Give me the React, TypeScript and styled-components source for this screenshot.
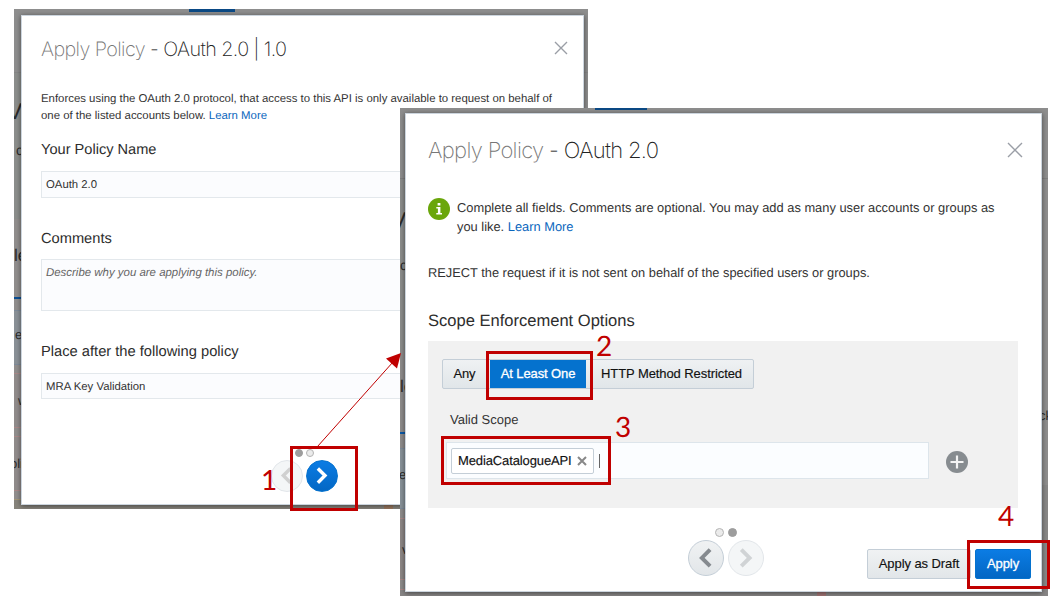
import React from "react";
import styled, { createGlobalStyle, css } from "styled-components";

const Global = createGlobalStyle`
  * { box-sizing: border-box; }
  body {
    margin: 0;
    background: #fff;
    font-family: "Liberation Sans", Arial, sans-serif;
    color: #333;
    text-rendering: geometricPrecision;
  }
`;

const Stage = styled.main`
  position: relative;
  width: 1062px;
  height: 606px;
  overflow: hidden;
  background: #fff;
`;

/* Window captures placed freely on the canvas */
const Shot = styled.section<{ $x: number; $y: number; $w: number; $h: number }>`
  position: absolute;
  left: ${(p) => p.$x}px;
  top: ${(p) => p.$y}px;
  width: ${(p) => p.$w}px;
  height: ${(p) => p.$h}px;
  overflow: hidden;
  background: #8e8e8e;
`;

const Backdrop = styled.div`
  display: flex;
  flex-direction: column;
  height: 100%;
`;

const Rails = styled.div`
  display: flex;
  justify-content: space-between;
`;

const Rail = styled.div`
  display: flex;
  flex-direction: column;
  width: 10px;
`;

const Band = styled.div<{ $h: number; $bg?: string; $line?: string; $thick?: number }>`
  flex: none;
  display: flex;
  align-items: center;
  height: ${(p) => p.$h}px;
  background: ${(p) => p.$bg || "#8e8e8e"};
  border-bottom: ${(p) => (p.$line ? `${p.$thick || 1}px solid ${p.$line}` : "0")};
`;

const Peek = styled.span<{ $size: number; $shift?: number }>`
  margin-left: ${(p) => p.$shift || 0}px;
  font-size: ${(p) => p.$size}px;
  line-height: 1;
  color: #2b2b2b;
`;

const Mark = styled.i<{ $x: number; $w: number; $h: number; $color?: string }>`
  display: block;
  margin-left: ${(p) => p.$x}px;
  width: ${(p) => p.$w}px;
  height: ${(p) => p.$h}px;
  background: ${(p) => p.$color || "#0b4a86"};
`;

const Dialog = styled.div<{ $inset: string; $pad: string }>`
  position: absolute;
  inset: ${(p) => p.$inset};
  padding: ${(p) => p.$pad};
  background: #fff;
  border: 1px solid #ccd5de;
  box-shadow: 0 1px 5px rgba(0, 0, 0, 0.5);
`;

const Header = styled.header`
  display: flex;
  align-items: center;
  justify-content: space-between;
  height: 34px;
`;

const Title = styled.h1<{ $size: number; $ls: number }>`
  margin: 0;
  font-family: Inter, "Liberation Sans", sans-serif;
  font-weight: 200;
  font-size: ${(p) => p.$size}px;
  letter-spacing: ${(p) => p.$ls}px;
  line-height: 34px;
  color: #222;
  white-space: pre;
  span { color: #777; }
`;

const Close = styled.button`
  display: flex;
  margin-bottom: 2px;
  padding: 0;
  border: 0;
  background: none;
`;

const Copy = styled.p<{ $size: number; $lh: number; $mt?: number; $ml?: number }>`
  margin: ${(p) => p.$mt || 0}px 0 0 ${(p) => p.$ml || 0}px;
  font-size: ${(p) => p.$size}px;
  line-height: ${(p) => p.$lh}px;
  color: #333;
  white-space: nowrap;
`;

const Line = styled.span`
  display: block;
`;

const Link = styled.a`
  color: #0a66bd;
`;

const Label = styled.h2<{ $mt: number; $size: number }>`
  margin: ${(p) => p.$mt}px 0 0;
  font-size: ${(p) => p.$size}px;
  font-weight: 400;
  line-height: 20px;
  color: #2d2d2d;
`;

const Field = styled.div<{ $mt: number; $h: number; $hint?: boolean }>`
  width: 520px;
  height: ${(p) => p.$h}px;
  margin-top: ${(p) => p.$mt}px;
  padding: 6px 4px 0;
  border: 1px solid #e3e8ec;
  background: #fbfcfe;
  font-size: 11.35px;
  line-height: 15px;
  color: #333;
  ${(p) => p.$hint && css`font-style: italic; color: #666; font-size: 11.45px;`}
`;

const Pager = styled.nav<{ $ml: number; $mt: number }>`
  display: flex;
  flex-direction: column;
  align-items: flex-start;
  margin: ${(p) => p.$mt}px 0 0 ${(p) => p.$ml}px;
`;

const Dots = styled.div<{ $ml: number; $gap: number }>`
  display: flex;
  gap: ${(p) => p.$gap}px;
  margin-left: ${(p) => p.$ml}px;
`;

const Dot = styled.i<{ $on?: boolean; $d: number }>`
  width: ${(p) => p.$d}px;
  height: ${(p) => p.$d}px;
  border-radius: 50%;
  border: 1.5px solid ${(p) => (p.$on ? "#9d9d9d" : "#b4b4b4")};
  background: ${(p) => (p.$on ? "#9d9d9d" : "#ebebeb")};
`;

const Steps = styled.div<{ $gap: number; $mt: number }>`
  display: flex;
  gap: ${(p) => p.$gap}px;
  margin-top: ${(p) => p.$mt}px;
`;

const tones = {
  primary: css`background: linear-gradient(#0b7ce4, #0367c4); border: 1px solid #0572ce;`,
  normal: css`background: linear-gradient(#f0f2f3, #e2e6e9); border: 1px solid #c4ced7;`,
  faint: css`background: #f4f6f7; border: 1px solid #e2e6ea;`,
};

const Round = styled.button<{ $d: number; $tone: keyof typeof tones }>`
  display: flex;
  align-items: center;
  justify-content: center;
  width: ${(p) => p.$d}px;
  height: ${(p) => p.$d}px;
  padding: 0;
  border-radius: 50%;
  ${(p) => tones[p.$tone]}
`;

const Info = styled.div`
  display: flex;
  gap: 7px;
  margin-top: 30px;
`;

const Panel = styled.div`
  width: 590px;
  height: 167px;
  margin-top: 10px;
  padding: 18px 14px;
  background: #f1f1f1;
`;

const Segments = styled.div`
  display: flex;
  width: 312px;
  height: 30px;
  border: 1px solid #c4ced7;
  border-radius: 2px;
  background: linear-gradient(#eff1f3, #e1e6e9);
`;

const Segment = styled.button<{ $w: number; $active?: boolean; $ls?: number; $pl?: number; $pr?: number }>`
  width: ${(p) => p.$w}px;
  height: 28px;
  padding: 0 ${(p) => p.$pr || 0}px 1px ${(p) => p.$pl || 0}px;
  border: 0;
  background: ${(p) => (p.$active ? "#0572ce" : "transparent")};
  color: ${(p) => (p.$active ? "#fff" : "#111")};
  font: 13px "Liberation Sans", Arial, sans-serif;
  letter-spacing: ${(p) => p.$ls || 0}px;
  white-space: nowrap;
  -webkit-text-stroke: ${(p) => (p.$active ? "0.3px #fff" : "0.15px #111")};
`;

const ScopeRow = styled.div`
  display: flex;
  align-items: center;
  margin: 12px 0 0 4px;
`;

const ScopeField = styled.div`
  display: flex;
  align-items: center;
  width: 483px;
  height: 37px;
  padding: 0 4px;
  border: 1px solid #dde5eb;
  background: #fbfdff;
`;

const Tag = styled.div`
  display: flex;
  align-items: center;
  justify-content: space-between;
  width: 143px;
  height: 26px;
  padding: 0 6px;
  border: 1px solid #c4ced7;
  border-radius: 2px;
  background: #fff;
  font-size: 13px;
  color: #111;
  letter-spacing: -0.12px;
  -webkit-text-stroke: 0.15px #111;
`;

const Caret = styled.i`
  width: 1px;
  height: 14px;
  margin-left: 5px;
  background: #666;
`;

const AddIcon = styled.span`
  display: flex;
  margin: 2px 0 0 17px;
`;

const Footer = styled.footer`
  display: flex;
  align-items: flex-start;
`;

const Actions = styled.div`
  display: flex;
  gap: 4px;
  margin: 41px 0 0 103px;
`;

const Button = styled.button<{ $w: number; $tone: "primary" | "normal" }>`
  width: ${(p) => p.$w}px;
  height: 30px;
  padding: 0 0 1px;
  border-radius: 2px;
  ${(p) => tones[p.$tone]}
  color: ${(p) => (p.$tone === "primary" ? "#fff" : "#111")};
  font: 13px "Liberation Sans", Arial, sans-serif;
  letter-spacing: -0.08px;
  -webkit-text-stroke: ${(p) => (p.$tone === "primary" ? "0.3px #fff" : "0.15px #111")};
`;

const Callout = styled.div<{ $x: number; $y: number; $w: number; $h: number }>`
  position: absolute;
  left: ${(p) => p.$x}px;
  top: ${(p) => p.$y}px;
  width: ${(p) => p.$w}px;
  height: ${(p) => p.$h}px;
  border: 3px solid #c00000;
`;

const Num = styled.span<{ $x: number; $y: number }>`
  position: absolute;
  left: ${(p) => p.$x}px;
  top: ${(p) => p.$y}px;
  font: 28px/28px Lato, sans-serif;
  color: #c00000;
`;

const Arrow = styled.svg`
  position: absolute;
  left: 300px;
  top: 340px;
`;

const Cross = ({ size, stroke, width }: { size: number; stroke: string; width: number }) => (
  <svg width={size} height={size} viewBox={`0 0 ${size} ${size}`}>
    <path d={`M1 1L${size - 1} ${size - 1}M${size - 1} 1L1 ${size - 1}`} stroke={stroke} strokeWidth={width} fill="none" />
  </svg>
);

const Chevron = ({ dir, color, s = 1 }: { dir: "left" | "right"; color: string; s?: number }) => (
  <svg width={14 * s} height={18 * s} viewBox="0 0 14 18">
    <path d={dir === "right" ? "M3 1.5L10.5 9L3 16.5" : "M11 1.5L3.5 9L11 16.5"} stroke={color} strokeWidth="3.6" fill="none" />
  </svg>
);

export default function App() {
  return (
    <>
      <Global />
      <Stage>
        <Shot $x={14} $y={9} $w={574} $h={500}>
          <Backdrop>
            <Band $h={3}><Mark $x={175} $w={46} $h={3} /></Band>
            <Band $h={61} $line="#868686" />
            <Rails>
              <Rail>
                <Band $h={18} $bg="#8c8e8c" />
                <Band $h={40} $bg="#8c8e8c"><Peek $size={23} $shift={-7}>V</Peek></Band>
                <Band $h={38} $bg="#8c8e8c"><Peek $size={14} $shift={2}>c</Peek></Band>
                <Band $h={50} $bg="#8c8e8c" />
                <Band $h={72} $bg="#918e8d"><Peek $size={17}>le</Peek></Band>
                <Band $h={8} $bg="#918e8d" $line="#0b4f94" $thick={2} />
                <Band $h={12} $bg="#918e8d" $line="#7d8a99" />
                <Band $h={46} $bg="#8a9197"><Peek $size={13} $shift={1}>e</Peek></Band>
                <Band $h={8} $bg="#8a9197" $line="#7d8a99" />
                <Band $h={9} $bg="#918e8d" $line="#a98888" />
                <Band $h={54} $bg="#918c8b" $line="#a98888"><Peek $size={13} $shift={4}>w</Peek></Band>
                <Band $h={9} $bg="#918e8d" $line="#a98888" />
                <Band $h={54} $bg="#918c8b" $line="#a98888"><Peek $size={13} $shift={-4}>pli</Peek></Band>
                <Band $h={9} $bg="#918e8d" $line="#a39678" />
              </Rail>
            </Rails>
            <Band $h={9} $bg="#87847c"><Mark $x={370} $w={9} $h={9} $color="#97775f" /></Band>
          </Backdrop>
          <Dialog $inset="6px 4px 4px 7px" $pad="16px 15px 0 19px">
            <Header>
              <Title $size={19.8} $ls={-0.59}><span>Apply Policy</span> - OAuth 2.0 | 1.0</Title>
              <Close aria-label="Close"><Cross size={14} stroke="#9a9ea6" width={1.4} /></Close>
            </Header>
            <Copy $size={11.4} $lh={17} $mt={25}>
              <Line>Enforces using the OAuth 2.0 protocol, that access to this API is only available to request on behalf of</Line>
              <Line>one of the listed accounts below. <Link>Learn More</Link></Line>
            </Copy>
            <Label $mt={15} $size={14.6}>Your Policy Name</Label>
            <Field $mt={11} $h={27}>OAuth 2.0</Field>
            <Label $mt={31} $size={14.65}>Comments</Label>
            <Field $mt={10} $h={52} $hint>Describe why you are applying this policy.</Field>
            <Label $mt={31} $size={14.7}>Place after the following policy</Label>
            <Field $mt={11} $h={26}>MRA Key Validation</Field>
            <Pager $ml={230} $mt={50}>
              <Dots $ml={24} $gap={3}><Dot $on $d={8} /><Dot $d={8} /></Dots>
              <Steps $gap={3} $mt={3}>
                <Round $d={32} $tone="faint"><Chevron dir="left" color="#d0d0d0" s={0.95} /></Round>
                <Round $d={32} $tone="primary"><Chevron dir="right" color="#fff" s={0.95} /></Round>
              </Steps>
            </Pager>
          </Dialog>
        </Shot>

        <Shot $x={400} $y={108} $w={648} $h={488}>
          <Backdrop>
            <Band $h={2}><Mark $x={195} $w={52} $h={2} /></Band>
            <Band $h={69} $line="#808080" />
            <Rails>
              <Rail>
                <Band $h={21} $bg="#8b8d8c" />
                <Band $h={40} $bg="#8b8d8c"><Peek $size={23} $shift={-9}>V</Peek></Band>
                <Band $h={50} $bg="#8b8d8c"><Peek $size={14}>c</Peek></Band>
                <Band $h={60} $bg="#8b8d8c" />
                <Band $h={72} $bg="#8e8c8b"><Peek $size={17}>le</Peek></Band>
                <Band $h={12} $bg="#8e8c8b" $line="#0b5aa8" $thick={2} />
                <Band $h={15} $bg="#8e8c8b" $line="#7d8a99" />
                <Band $h={50} $bg="#879198"><Peek $size={13} $shift={-1}>e</Peek></Band>
                <Band $h={10} $bg="#879198" $line="#7d8a99" />
                <Band $h={10} $bg="#8e8c8b" $line="#a98888" />
                <Band $h={61} $bg="#8d8786" $line="#a98888"><Peek $size={13} $shift={2}>v</Peek></Band>
                <Band $h={10} $bg="#8e8c8b" $line="#a98888" />
              </Rail>
              <Rail>
                <Band $h={216} />
                <Band $h={40}><Peek $size={13} $shift={1}>ck</Peek></Band>
                <Band $h={50} />
                <Band $h={105} $bg="#888" />
              </Rail>
            </Rails>
            <Band $h={6} $bg="#888686"><Mark $x={417} $w={9} $h={6} $color="#a07475" /></Band>
          </Backdrop>
          <Dialog $inset="5px 6px 4px 5px" $pad="20px 18px 0 22px">
            <Header>
              <Title $size={22} $ls={-0.68}><span>Apply Policy</span> - OAuth 2.0</Title>
              <Close aria-label="Close"><Cross size={16} stroke="#9a9ea6" width={1.4} /></Close>
            </Header>
            <Info>
              <svg width="22" height="22" viewBox="0 0 22 22">
                <circle cx="11" cy="11" r="11" fill="#6aa60b" />
                <path d="M9.6 5h2.8v2.4H9.6zM8.3 9h4.1v6H14v1.6H8.3V15h1.6v-4.4H8.3z" fill="#fff" />
              </svg>
              <Copy $size={12.86} $lh={19}>
                <Line>Complete all fields. Comments are optional. You may add as many user accounts or groups as</Line>
                <Line>you like. <Link>Learn More</Link></Line>
              </Copy>
            </Info>
            <Copy $size={12.83} $lh={20} $mt={27}>REJECT the request if it is not sent on behalf of the specified users or groups.</Copy>
            <Label $mt={28} $size={16.55}>Scope Enforcement Options</Label>
            <Panel>
              <Segments>
                <Segment $w={47} $pr={4} $ls={-0.2}>Any</Segment>
                <Segment $w={96} $active $ls={-0.1}>At Least One</Segment>
                <Segment $w={167} $pl={4} $ls={-0.08}>HTTP Method Restricted</Segment>
              </Segments>
              <Copy $size={13} $lh={20} $mt={21} $ml={8}>Valid Scope</Copy>
              <ScopeRow>
                <ScopeField>
                  <Tag>MediaCatalogueAPI <Cross size={10} stroke="#888" width={2} /></Tag>
                  <Caret />
                </ScopeField>
                <AddIcon>
                  <svg width="22" height="22" viewBox="0 0 22 22">
                    <circle cx="11" cy="11" r="11" fill="#878c90" />
                    <path d="M11 4.5v13M4.5 11h13" stroke="#f3f3f3" strokeWidth="2.2" />
                  </svg>
                </AddIcon>
              </ScopeRow>
            </Panel>
            <Footer>
              <Pager $ml={260} $mt={20}>
                <Dots $ml={27} $gap={4}><Dot $d={9} /><Dot $on $d={9} /></Dots>
                <Steps $gap={4} $mt={3}>
                  <Round $d={36} $tone="normal"><Chevron dir="left" color="#858a8f" s={1.1} /></Round>
                  <Round $d={36} $tone="faint"><Chevron dir="right" color="#d0d3d5" s={1.1} /></Round>
                </Steps>
              </Pager>
              <Actions>
                <Button $w={104} $tone="normal">Apply as Draft</Button>
                <Button $w={56} $tone="primary">Apply</Button>
              </Actions>
            </Footer>
          </Dialog>
        </Shot>

        <Arrow width="110" height="110" viewBox="300 340 110 110">
          <path d="M317.5 446.5L393 362" stroke="#c00000" strokeWidth="1" />
          <path d="M401 353L386 358.5L397 368.5Z" fill="#c00000" />
        </Arrow>
        <Callout $x={290} $y={446} $w={68} $h={65} />
        <Callout $x={486} $y={351} $w={107} $h={49} />
        <Callout $x={441} $y={436} $w={170} $h={49} />
        <Callout $x={967} $y={540} $w={83} $h={49} />
        <Num $x={261} $y={465}>1</Num>
        <Num $x={596} $y={331}>2</Num>
        <Num $x={615} $y={412}>3</Num>
        <Num $x={998} $y={501}>4</Num>
      </Stage>
    </>
  );
}
